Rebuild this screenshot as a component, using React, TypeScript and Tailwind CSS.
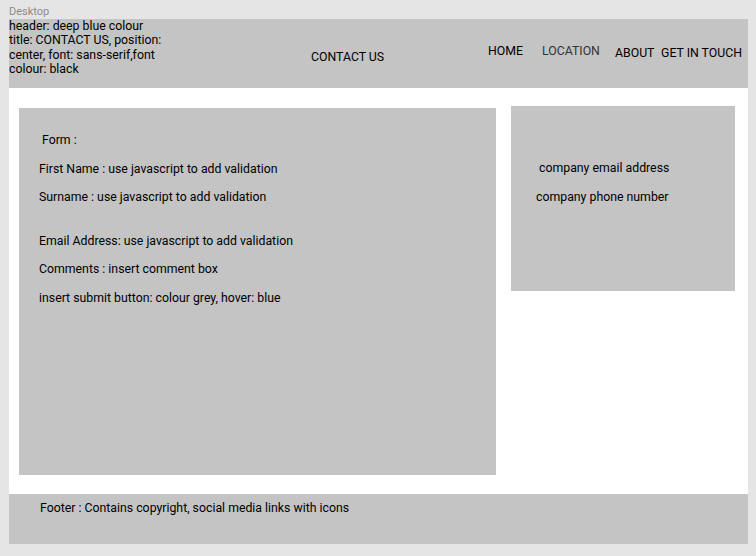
export default function App() {
  return (
    <div className="w-[756px] h-[556px] bg-[#e5e5e5] font-['Roboto',sans-serif] text-black overflow-hidden whitespace-nowrap">
      <p className="pl-[9px] pt-[5px] h-[19px] text-[11px] leading-[13px] text-[#8c8c8c]">Desktop</p>
      <div className="ml-[9px] w-[739px] bg-white flex flex-col">
        <header className="h-[69px] bg-[#c4c4c4] flex items-start text-[12.3px]">
          <div className="w-[160px] leading-[14.4px]">
            <p>header: deep blue colour</p>
            <p>title: CONTACT US, position:</p>
            <p>center, font: sans-serif,font</p>
            <p>colour: black</p>
          </div>
          <p className="ml-[142px] w-[177px] mt-[30px] leading-[16px]">CONTACT US</p>
          <nav className="flex items-start leading-[16px]">
            <a className="w-[54px] mt-[24px]">HOME</a>
            <a className="w-[73px] mt-[24px] text-[#333]">LOCATION</a>
            <a className="w-[46px] mt-[26px]">ABOUT</a>
            <a className="mt-[26px]">GET IN TOUCH</a>
          </nav>
        </header>
        <main className="h-[406px] flex items-start text-[12.3px] leading-[15px]">
          <section className="ml-[10px] mt-[20px] w-[477px] h-[367px] bg-[#c4c4c4] pl-[20px] pt-[25px]">
            <p className="pl-[3px]">Form :</p>
            <p className="mt-[14px]">First Name : use javascript to add validation</p>
            <p className="mt-[13px]">Surname : use javascript to add validation</p>
            <p className="mt-[29px]">Email Address: use javascript to add validation</p>
            <p className="mt-[13px]">Comments : insert comment box</p>
            <p className="mt-[14px]">insert submit button: colour grey, hover: blue</p>
          </section>
          <aside className="ml-[15px] mt-[18px] w-[224px] h-[185px] bg-[#c4c4c4] pl-[25px] pt-[55px]">
            <p className="pl-[3px]">company email address</p>
            <p className="mt-[14px]">company phone number</p>
          </aside>
        </main>
        <footer className="h-[50px] bg-[#c4c4c4] pl-[31px] pt-[7px] text-[12.3px] leading-[15px]">
          <p>Footer : Contains copyright, social media links with icons</p>
        </footer>
      </div>
    </div>
  );
}
